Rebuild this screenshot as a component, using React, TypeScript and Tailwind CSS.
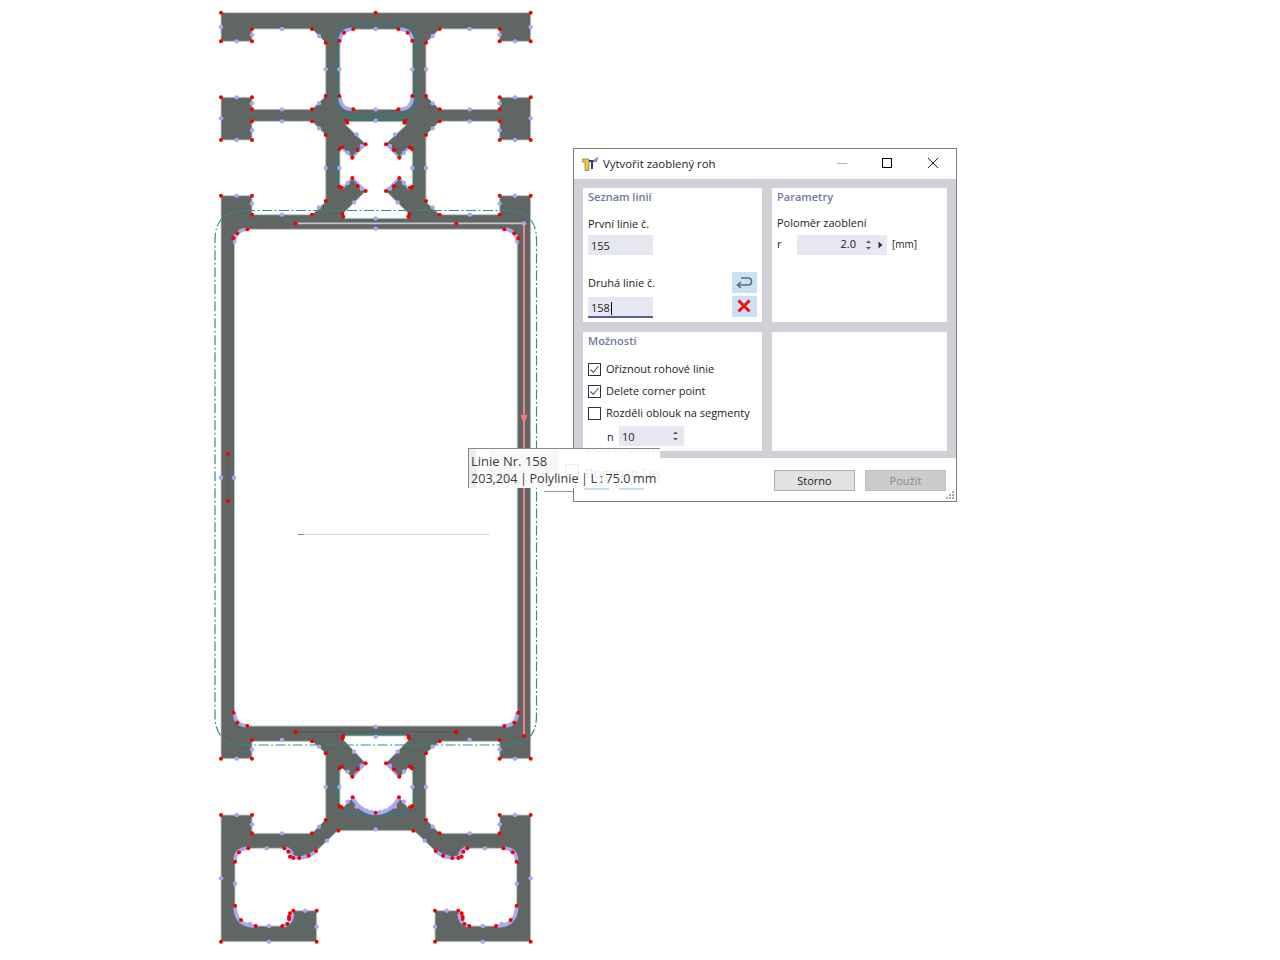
import React from "react";

const OUTER =
  "M221 12.7 L530.7 12.7 L530.7 41.3 L499.7 41.3 L499.7 29 L439.7 29 L426 42.7 L426 96 L439.7 109.3 L499.7 109.3 L499.7 97.3 L530.7 97.3 L530.7 140 L499.7 140 L499.7 121.3 L439.7 121.3 L426 135 L426 201.7 L439.7 214.7 L499.7 214.7 L499.7 195.7 L530.7 195.7 L530.7 758.7 L499.7 758.7 L499.7 741.3 L439.7 741.3 L426 753.3 L426 819.3 L439.7 833.3 L499.7 833.3 L499.7 815 L530.7 815 L530.7 941.7 L435 941.7 L435 910.7 L456 910.7 Q458.3 910.7 459 914 Q460 924 468.3 926 L496.7 926 Q516.7 926 516.7 905 L516.7 861.7 Q516.7 848.3 503.3 848.3 L466.7 848.3 Q462 848.3 460.5 853 Q459 858 453 858 Q443 858 435 850.7 L414 830.7 L337.7 830.7 L316.7 850.7 Q308.7 858 298.7 858 Q292.7 858 291.2 853 Q289.7 848.3 285 848.3 L248.4 848.3 Q235 848.3 235 861.7 L235 905 Q235 926 255 926 L283.4 926 Q291.7 924 292.7 914 Q293.4 910.7 295.7 910.7 L316.7 910.7 L316.7 941.7 L221 941.7 L221 815 L252 815 L252 833.3 L312 833.3 L325.7 819.3 L325.7 753.3 L312 741.3 L252 741.3 L252 758.7 L221 758.7 L221 195.7 L252 195.7 L252 214.7 L312 214.7 L325.7 201.7 L325.7 135 L312 121.3 L252 121.3 L252 140 L221 140 L221 97.3 L252 97.3 L252 109.3 L312 109.3 L325.7 96 L325.7 42.7 L312 29 L252 29 L252 41.3 L221 41.3 Z";
const BIG = "M248.5 229.3 L503.2 229.3 Q517.2 229.3 517.2 243.3 L517.2 712 Q517.2 726 503.2 726 L248.5 726 Q234.5 726 234.5 712 L234.5 243.3 Q234.5 229.3 248.5 229.3 Z";
const SQUARE = "M353 29.3 L399.3 29.3 Q412.3 29.3 412.3 42.3 L412.3 96.3 Q412.3 109.3 399.3 109.3 L353 109.3 Q340 109.3 340 96.3 L340 42.3 Q340 29.3 353 29.3 Z";
const HOUR = "M346 121.7 L404 121.7 L406 125 L385.7 144 L399.3 157.7 L408.3 148.3 L412.3 151.7 L412.3 186.7 L409.3 189.3 L399.3 177.7 L385.7 191 L410 215 L408.3 218.3 L343.3 218.3 L341.7 215 L365.7 191 L352.3 177.7 L341.7 189.3 L340 186.7 L340 151.7 L341.7 148.3 L352.3 157.7 L365.7 144 L346 125 Z";
const LOWER = "M344 736 L407.3 736 L409.3 739.3 L385.7 763.3 L399.3 777.7 L408.3 767.7 L412.3 770.7 L412.3 806 L409.3 809 L399.3 797.7 Q390 813.3 376 813.3 Q362 813.3 352.3 797.7 L341.7 809 L340 806 L340 770.7 L341.7 767.7 L352.3 777.7 L365.7 763.3 L343 739.3 Z";

const ARCS = [
  "M340 42.3 Q340 29.3 353 29.3", "M412.3 42.3 Q412.3 29.3 399.3 29.3", "M340 96.3 Q340 109.3 353 109.3", "M412.3 96.3 Q412.3 109.3 399.3 109.3",
  "M234.5 243.3 Q234.5 229.3 248.5 229.3", "M517.2 243.3 Q517.2 229.3 503.2 229.3", "M234.5 712 Q234.5 726 248.5 726", "M517.2 712 Q517.2 726 503.2 726",
  "M235 905 Q235 926 255 926", "M516.7 905 Q516.7 926 496.7 926", "M235 861.7 Q235 848.3 248.4 848.3", "M516.7 861.7 Q516.7 848.3 503.3 848.3",
  "M352.3 797.7 Q362 813.3 376 813.3 Q390 813.3 399.3 797.7", "M298.7 858 Q308.7 858 316.7 850.7", "M453 858 Q443 858 435 850.7", "M285 848.3 Q292 850 292 856 Q294 858 298.7 858", "M466.7 848.3 Q460 850 460 856 Q458 858 453 858",
  "M283.4 926 Q291.7 924 292.7 914", "M468.3 926 Q460 924 459 914",
  "M352.3 157.7 L341.7 148.3", "M399.3 157.7 L408.3 148.3", "M365.7 144 L352.3 157.7", "M385.7 144 L399.3 157.7", "M365.7 191 L352.3 177.7", "M385.7 191 L399.3 177.7", "M352.3 177.7 L341.7 189.3", "M399.3 177.7 L409.3 189.3",
  "M365.7 763.3 L352.3 777.7", "M385.7 763.3 L399.3 777.7",
];

const TEAL_SOLID_DASH = [
  "M353 24 L399 24 Q416 24 416 41 L416 98 Q416 115 399 115 L353 115 Q336.7 115 336.7 98 L336.7 41 Q336.7 24 353 24 Z",
  "M347.5 118.3 L405 118.3",
  "M336.7 146 L336.7 186", "M416 146 L416 186",
  "M343 220 L408 220",
  "M345 734.3 L407 734.3", "M336.7 766 L336.7 806", "M416 766 L416 806",
  "M345 812 Q360 816 376 816 Q392 816 407 812",
];

const z3Red: [number, number][] = [[33,38],[33,124],[126,124],[126,87],[306,87],[347,128],[347,288],[306,328],[126,328],[126,292],[33,292],[33,420],[126,420],[126,364],[306,364],[347,405],[347,603],[306,644],[126,644],[126,587],[33,587],[402,98],[430,87],[388,122],[388,288],[430,328],[412,368],[409,362],[467,433],[388,447],[396,442],[427,473],[443,450],[467,573],[427,534],[443,558],[395,563],[388,560],[400,650],[397,642],[70,715],[82,700],[112,688]];
const z3Blue: [number, number][] = [[33,81],[80,124],[126,104],[216,87],[327,108],[347,208],[327,310],[216,328],[126,310],[80,292],[33,355],[80,420],[126,391],[216,364],[327,385],[347,504],[327,622],[216,644],[126,610],[80,587],[388,208],[440,403],[455,438],[413,458],[388,504],[413,549],[455,566],[432,607]];
const z3Center: [number, number][] = [[497,87],[497,328],[497,362],[497,655],[497,686]];
const z4Red: [number, number][] = [[33,176],[126,176],[126,120],[306,124],[347,160],[347,360],[306,400],[126,400],[126,345],[33,345],[33,725],[320,725],[320,632],[250,632],[240,640],[237,650],[237,657],[232,672],[217,678],[137,678],[93,660],[75,617],[75,485],[87,457],[115,445],[223,445],[235,455],[240,470],[250,474],[268,474],[296,467],[318,453],[385,392],[257,95],[398,115],[400,108],[467,190],[427,230],[443,208],[388,205],[395,200],[428,292],[388,318],[395,322],[70,38],[82,68],[112,78]];
const z4Blue: [number, number][] = [[80,176],[126,148],[216,120],[327,140],[347,261],[327,380],[216,400],[126,373],[80,345],[33,535],[177,725],[320,680],[285,632],[177,678],[120,672],[75,551],[170,445],[351,422],[285,470],[432,155],[413,215],[455,197],[388,261],[413,305],[440,320],[455,325],[470,332],[485,336]];
const z4Center: [number, number][] = [[497,388],[497,110],[497,80]];

const mirror = (p: [number, number][]) => p.flatMap(([x, y]) => [[x, y], [995 - x, y]] as [number, number][]);
const top = (p: [number, number][]) => p.map(([x, y]) => [210 + x / 3, y / 3]);
const bot = (p: [number, number][]) => p.map(([x, y]) => [210 + x / 3, 700 + y / 3]);

const REDS = [
  ...top(mirror(z3Red)), ...top([[497, 38]]), ...bot(mirror(z4Red)), ...bot([[497, 338]]),
  [456.3, 223.4], [228, 454], [228, 501], [456.3, 731.7], [524, 736],
];
const BLUES = [
  ...top(mirror(z3Blue)), ...top(z3Center), ...bot(mirror(z4Blue)), ...bot(z4Center),
  [221, 477.7], [234, 477.7], [524, 223.4],
];

function Profile() {
  return (
    <svg className="absolute left-0 top-0" width={1280} height={960} viewBox="0 0 1280 960">
      <path d={OUTER + " " + BIG + " " + SQUARE + " " + HOUR + " " + LOWER} fill="#5f6664" fillRule="evenodd" stroke="#c4c6c5" strokeWidth={0.9} />
      {ARCS.map((d, i) => (
        <path key={i} d={d} fill="none" stroke="#a9a9f2" strokeWidth={i < 19 ? 3.6 : 2} />
      ))}
      <path d="M245 210.5 L507 210.5 Q536.5 210.5 536.5 240 L536.5 715.5 Q536.5 745 507 745 L245 745 Q215 745 215 715.5 L215 240 Q215 210.5 245 210.5 Z" fill="none" stroke="#2a9090" strokeWidth={1.2} strokeDasharray="10 2.5 2 2.5" />
      {TEAL_SOLID_DASH.map((d, i) => (
        <path key={i} d={d} fill="none" stroke="#148a8a" strokeWidth={1.2} strokeDasharray="7 2 2 2" />
      ))}
      <line x1={228} y1={454} x2={228} y2={501} stroke="#555b59" strokeWidth={1} />
      <line x1={296} y1={731.7} x2={456} y2={731.7} stroke="#565c5a" strokeWidth={1} />
      <line x1={298} y1={534.5} x2={490} y2={534.5} stroke="#dcdcdc" strokeWidth={1} />
      <line x1={298} y1={534.5} x2={304} y2={534.5} stroke="#8a8a8a" strokeWidth={1} />
      <line x1={296} y1={223.4} x2={524} y2={223.4} stroke="#c6c6c6" strokeWidth={1.7} />
      <line x1={524} y1={222} x2={524} y2={737} stroke="#ff8a8a" strokeWidth={1.8} />
      <polygon points="520.5,415 527.5,415 524,424" fill="#ff7878" />
      {BLUES.map(([x, y], i) => (
        <circle key={i} cx={x} cy={y} r={2.2} fill="#a8a8f2" />
      ))}
      {REDS.map(([x, y], i) => (
        <circle key={i} cx={x} cy={y} r={2} fill="#f00000" />
      ))}
      <circle cx={295.7} cy={223.4} r={2} fill="#f00000" />
      <circle cx={295.7} cy={731.7} r={2} fill="#f00000" />
      <line x1={544} y1={491.5} x2={573} y2={491.5} stroke="#9a9a9a" strokeWidth={1} />
    </svg>
  );
}

function Check({ checked }: { checked: boolean }) {
  return (
    <span className="flex h-[13px] w-[13px] shrink-0 items-center justify-center border border-[#333333] bg-white">
      {checked && (
        <svg width={11} height={11} viewBox="0 0 11 11">
          <path d="M1.5 5.5 L4.3 8.5 L9.5 2" fill="none" stroke="#555555" strokeWidth={1.1} />
        </svg>
      )}
    </span>
  );
}

function Option({ checked, label }: { checked: boolean; label: string }) {
  return (
    <div className="flex h-[22px] items-center gap-[4px] pl-[5px]">
      <Check checked={checked} />
      <span className="ml-[1px]">{label}</span>
    </div>
  );
}

function Spin() {
  return (
    <svg width={7} height={12} viewBox="0 0 7 12" className="shrink-0">
      <path d="M3.5 1.5 L6 4 L1 4 Z" fill="#555555" />
      <path d="M3.5 10.5 L6 8 L1 8 Z" fill="#555555" />
    </svg>
  );
}

function Heading({ children }: { children: React.ReactNode }) {
  return <div className="h-[18px] pl-[5px] font-semibold leading-[18px] text-[#6e7a9c]">{children}</div>;
}

function Dialog() {
  return (
    <div className="absolute left-[573px] top-[148px] flex h-[354px] w-[384px] flex-col border border-[#7d7d7d] bg-white font-['Open_Sans',sans-serif] text-[11px] text-[#1c1c1c]">
      <div className="flex h-[30px] shrink-0 items-center pl-[8px]">
        <svg width={17} height={16} viewBox="0 0 17 16" className="shrink-0">
          <path d="M0.5 3 L7 3 L7 14.5 L3 14.5 L3 6 L0.5 6 Z" fill="#e8c84a" stroke="#8a7420" strokeWidth={0.7} />
          <path d="M7 4 L13 4 L13 6 L11 6 L11 13 L9 13 L9 6 L7 6 Z" fill="#2c3a74" />
          <path d="M10.5 4.5 L16.5 0.5 L15 6 L12.5 6 Z" fill="#8a86e0" />
        </svg>
        <span className="ml-[4px] text-[11.4px]">Vytvořit zaoblený roh</span>
        <div className="ml-auto flex items-center pb-[2px]">
          <span className="mr-[35px] h-px w-[10px] bg-[#b5b5b5]" />
          <span className="mr-[36px] h-[10px] w-[10px] border border-black" />
          <svg width={10} height={10} viewBox="0 0 10 10" className="mr-[18px]">
            <path d="M0 0 L10 10 M10 0 L0 10" stroke="#222222" strokeWidth={1} />
          </svg>
        </div>
      </div>

      <div className="grid h-[279px] shrink-0 grid-cols-[179px_175px] grid-rows-[134px_119px] gap-[10px] bg-[#d0d0d6] pl-[9px] pt-[9px]">
        <section className="bg-white">
          <Heading>Seznam linií</Heading>
          <div className="mt-[9px] h-[18px] pl-[5px] leading-[18px]">První linie č.</div>
          <div className="ml-[5px] mt-[2px] flex h-[20px] w-[65px] items-center bg-[#e7e7f2] pl-[3px] pt-[2px]">155</div>
          <div className="mt-[17px] flex h-[21px] items-center justify-between pl-[5px] pr-[5px]">
            <span className="pt-[1px]">Druhá linie č.</span>
            <span className="flex h-[21px] w-[25px] items-center justify-center bg-[#c9e1f5]">
              <svg width={17} height={13} viewBox="0 0 17 13">
                <path d="M5 2 L12 2 Q15.5 2 15.5 5.5 Q15.5 9 12 9 L2 9 M5 6 L1.5 9 L5 12" fill="none" stroke="#5b6a78" strokeWidth={1.6} />
              </svg>
            </span>
          </div>
          <div className="mt-[3px] flex items-start justify-between pl-[5px] pr-[5px]">
            <div className="mt-[1px] flex h-[21px] w-[65px] items-center border-b-2 border-[#5a5a9e] bg-[#e7e7f2] pl-[3px] pt-[4px]">
              158<span className="ml-px h-[13px] w-px bg-black" />
            </div>
            <span className="flex h-[21px] w-[25px] items-center justify-center bg-[#c9e1f5] pb-[1px] pr-[1px]">
              <svg width={14} height={14} viewBox="0 0 14 14">
                <path d="M1.5 1.5 L12.5 12.5 M12.5 1.5 L1.5 12.5" stroke="#ee1111" strokeWidth={3} />
              </svg>
            </span>
          </div>
        </section>

        <section className="bg-white">
          <Heading>Parametry</Heading>
          <div className="mt-[8px] h-[18px] pl-[5px] leading-[18px]">Poloměr zaoblení</div>
          <div className="mt-[3px] flex items-center pl-[5px]">
            <span className="w-[20px] pb-[1px]">r</span>
            <div className="flex h-[20px] w-[90px] items-center justify-end bg-[#e7e7f2] pr-[4px]">
              <span className="mr-[9px] pb-[1px]">2.0</span>
              <Spin />
              <svg width={5} height={8} viewBox="0 0 5 8" className="ml-[6px]">
                <path d="M0.5 0.5 L4.5 4 L0.5 7.5 Z" fill="#333333" />
              </svg>
            </div>
            <span className="ml-[5px] pb-[1px] text-[10px]">[mm]</span>
          </div>
        </section>

        <section className="bg-white">
          <Heading>Možnosti</Heading>
          <div className="mt-[8px]">
            <Option checked label="Oříznout rohové linie" />
            <Option checked label="Delete corner point" />
            <Option checked={false} label="Rozděli oblouk na segmenty" />
          </div>
          <div className="mt-[2px] flex items-center pl-[24px]">
            <span className="w-[12px] pt-[2px]">n</span>
            <div className="flex h-[20px] w-[65px] items-center justify-between bg-[#e7e7f2] pl-[3px] pr-[5px]">
              <span className="pt-[2px]">10</span>
              <Spin />
            </div>
          </div>
        </section>

        <section className="bg-white" />
      </div>

      <div className="flex h-[43px] shrink-0 items-start justify-end gap-[10px] pr-[10px] pt-[12px]">
        <button className="h-[21px] w-[81px] border border-[#adadad] bg-[#e1e1e1] text-[11px] leading-[18px]">Storno</button>
        <button className="h-[21px] w-[81px] border border-[#bfbfbf] bg-[#cccccc] text-[11px] leading-[18px] text-[#8a8a8a]">Použít</button>
      </div>
      <svg width={9} height={9} viewBox="0 0 9 9" className="absolute bottom-[2px] right-[2px]">
        {[[7, 1], [4, 4], [7, 4], [1, 7], [4, 7], [7, 7]].map(([x, y], i) => (
          <rect key={i} x={x} y={y} width={2} height={2} fill="#a8a8a8" />
        ))}
      </svg>
    </div>
  );
}

function Tooltip() {
  return (
    <div className="absolute left-[468px] top-[448px] h-[40px] w-[192px] border-l border-t border-[#8a8a8a] bg-white font-['Open_Sans',sans-serif] text-[13px] leading-[18px] text-[#3a3a3a]">
      <div className="absolute inset-y-0 left-0 w-[7px] bg-[#ededed]" />
      <div className="absolute inset-y-0 left-[20px] w-[70px] bg-[#f8f8f8]" />
      <span className="absolute left-[96px] top-[15px] h-[15px] w-[14px] border border-[#ececec]" />
      <div className="absolute inset-0 overflow-hidden">
        <span className="absolute left-[116px] top-[-11px] whitespace-nowrap text-[#ececec]">Delete corne</span>
        <span className="absolute left-[116px] top-[15px] whitespace-nowrap text-[#ececec]">Bogen in Seg</span>
      </div>
      <span className="absolute bottom-[-2px] left-[115px] h-[2px] w-[25px] bg-[#c9e1f5]" />
      <span className="absolute bottom-[-2px] left-[150px] h-[2px] w-[25px] bg-[#c9e1f5]" />
      <div className="relative pl-[2px] pt-[3px]">
        <div className="whitespace-nowrap">Linie Nr. 158</div>
        <div className="whitespace-nowrap text-[12.6px] [word-spacing:-0.7px]">203,204 | Polylinie | L : 75.0 mm</div>
      </div>
    </div>
  );
}

export default function App() {
  return (
    <div className="relative h-[960px] w-[1280px] overflow-hidden bg-white">
      <Profile />
      <Dialog />
      <Tooltip />
    </div>
  );
}
